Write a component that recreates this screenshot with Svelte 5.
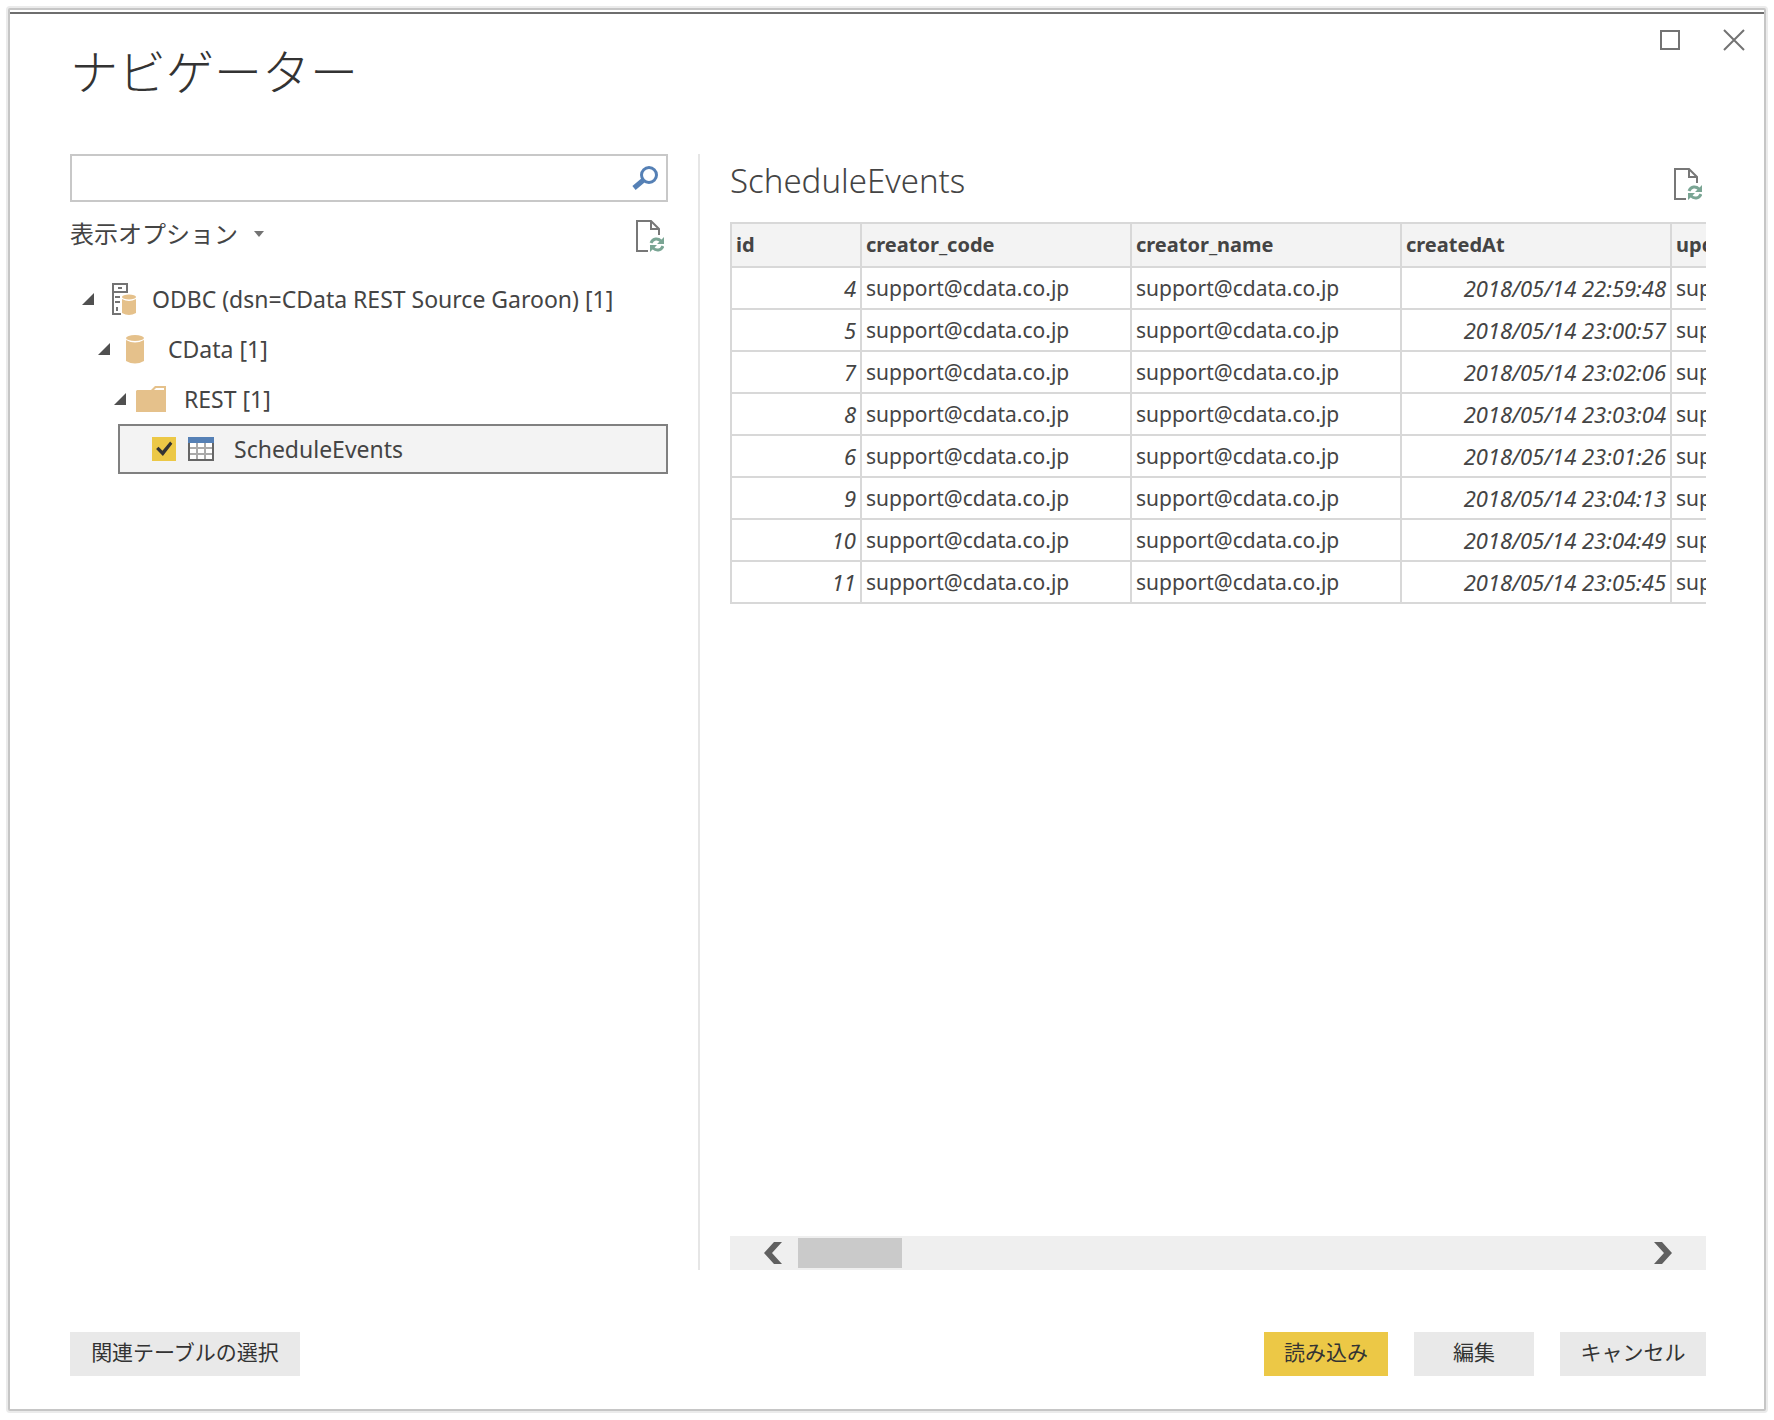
<script lang="ts">
	type Row = { id: number; createdAt: string };

	const user = "support@cdata.co.jp";
	const columns = ["id", "creator_code", "creator_name", "createdAt", "updater_code"];
	const rows: Row[] = [
		{ id: 4, createdAt: "2018/05/14 22:59:48" },
		{ id: 5, createdAt: "2018/05/14 23:00:57" },
		{ id: 7, createdAt: "2018/05/14 23:02:06" },
		{ id: 8, createdAt: "2018/05/14 23:03:04" },
		{ id: 6, createdAt: "2018/05/14 23:01:26" },
		{ id: 9, createdAt: "2018/05/14 23:04:13" },
		{ id: 10, createdAt: "2018/05/14 23:04:49" },
		{ id: 11, createdAt: "2018/05/14 23:05:45" },
	];

	let search = $state("");
	let checked = $state(true);
	let open = $state({ odbc: true, cdata: true, rest: true });
	let grid: HTMLDivElement;

	function scrollGrid(amount: number) {
		grid.scrollBy({ left: amount });
	}
</script>

{#snippet refreshIcon()}
	<svg width="28" height="32" viewBox="0 0 28 32" fill="none">
		<path d="M12 31H1V1H15L23 9V15M15 1V9H23" stroke="#777" stroke-width="2" />
		<path d="M15 23C17 18 22 18 25 21M27 26C25 31 20 31 17 28" stroke="#7aa594" stroke-width="3" />
		<path d="M28 17V24H21ZM14 32V25H21Z" fill="#7aa594" />
	</svg>
{/snippet}

{#snippet arrow(expanded: boolean)}
	<svg class="arrow" class:collapsed={!expanded} width="12" height="12" viewBox="0 0 12 12">
		<path d="M12 0V12H0Z" fill="#505050" />
	</svg>
{/snippet}

<div class="dialog">
	<header class="header">
		<h1>ナビゲーター</h1>
		<div class="windowButtons">
			<button aria-label="最大化">
				<svg width="20" height="20" viewBox="0 0 20 20"><rect x="1" y="1" width="18" height="18" fill="none" stroke="#737373" stroke-width="2" /></svg>
			</button>
			<button aria-label="閉じる">
				<svg width="22" height="22" viewBox="0 0 22 22"><path d="M1 1L21 21M21 1L1 21" stroke="#737373" stroke-width="2" /></svg>
			</button>
		</div>
	</header>

	<main class="content">
		<section class="sources">
			<div class="searchBox">
				<input type="text" aria-label="検索" bind:value={search} />
				<button aria-label="検索">
					<svg width="26" height="24" viewBox="0 0 26 24" fill="none" stroke="#5580b5">
						<circle cx="17" cy="9" r="7.5" stroke-width="3" />
						<path d="M11.5 14L2 22" stroke-width="5" />
					</svg>
				</button>
			</div>
			<div class="options">
				<button class="optionsMenu">
					表示オプション
					<svg width="10" height="6" viewBox="0 0 10 6"><path d="M0 0H10L5 6Z" fill="#737373" /></svg>
				</button>
				<button aria-label="更新">{@render refreshIcon()}</button>
			</div>

			<ul class="tree">
				<li>
					<button class="node" onclick={() => (open.odbc = !open.odbc)}>
						{@render arrow(open.odbc)}
						<span class="icon wide">
							<svg width="24" height="32" viewBox="0 0 24 32" fill="none">
								<path d="M15 9V1H1V31H9M1 9H16M6 5H10M3 14H8M3 19H8M5 24V28" stroke="#737373" stroke-width="2" />
								<ellipse cx="17" cy="14" rx="7" ry="2.5" fill="#e5c18b" />
								<path d="M10 16Q17 20 24 16V30Q17 34 10 30Z" fill="#e5c18b" />
							</svg>
						</span>
						ODBC (dsn=CData REST Source Garoon) [1]
					</button>
					{#if open.odbc}
						<ul>
							<li>
								<button class="node" onclick={() => (open.cdata = !open.cdata)}>
									{@render arrow(open.cdata)}
									<span class="icon">
										<svg width="18" height="29" viewBox="0 0 18 29" fill="#e5c18b">
											<ellipse cx="9" cy="3" rx="9" ry="3" />
											<path d="M0 5Q9 10 18 5V26Q9 31 0 26Z" />
										</svg>
									</span>
									CData [1]
								</button>
								{#if open.cdata}
									<ul>
										<li>
											<button class="node" onclick={() => (open.rest = !open.rest)}>
												{@render arrow(open.rest)}
												<span class="icon folder">
													<svg width="30" height="26" viewBox="0 0 30 26">
														<path d="M0 5L1 4H15L19 0H30V26H0Z" fill="#e5c18b" />
														<path d="M18 4L20 2H28V4Z" fill="#fff" />
													</svg>
												</span>
												REST [1]
											</button>
											{#if open.rest}
												<div class="leaf">
													<input type="checkbox" id="scheduleEvents" bind:checked />
													<label for="scheduleEvents">
														<svg width="26" height="24" viewBox="0 0 26 24" fill="none">
															<rect x="1" y="1" width="24" height="22" fill="#fff" />
															<path d="M9 6V22M17 6V22M2 11H24M2 17H24" stroke="#aaa" stroke-width="2" />
															<path d="M1 6V23H25V6" stroke="#666" stroke-width="2" />
															<path d="M0 0H26V6H0Z" fill="#5580b5" />
														</svg>
														ScheduleEvents
													</label>
												</div>
											{/if}
										</li>
									</ul>
								{/if}
							</li>
						</ul>
					{/if}
				</li>
			</ul>
		</section>

		<section class="preview">
			<div class="previewHeader">
				<h2>ScheduleEvents</h2>
				<button aria-label="更新">{@render refreshIcon()}</button>
			</div>
			<div class="grid" bind:this={grid}>
				<table>
					<thead>
						<tr>
							{#each columns as column}
								<th>{column}</th>
							{/each}
						</tr>
					</thead>
					<tbody>
						{#each rows as row}
							<tr>
								<td class="number">{row.id}</td>
								<td>{user}</td>
								<td>{user}</td>
								<td class="number">{row.createdAt}</td>
								<td>{user}</td>
							</tr>
						{/each}
					</tbody>
				</table>
			</div>
			<div class="scrollbar">
				<button aria-label="左へ" onclick={() => scrollGrid(-270)}>
					<svg width="18" height="22" viewBox="0 0 18 22"><path d="M10 0H18L8 11L18 22H10L0 11Z" fill="#606060" /></svg>
				</button>
				<div class="track"><div class="thumb"></div></div>
				<button aria-label="右へ" onclick={() => scrollGrid(270)}>
					<svg width="18" height="22" viewBox="0 0 18 22"><path d="M8 0H0L10 11L0 22H8L18 11Z" fill="#606060" /></svg>
				</button>
			</div>
		</section>
	</main>

	<footer class="footer">
		<button class="related">関連テーブルの選択</button>
		<button class="load">読み込み</button>
		<button class="edit">編集</button>
		<button class="cancel">キャンセル</button>
	</footer>
</div>

<style>
	:global(body) {
		margin: 0;
		background: #fff;
	}

	.dialog {
		box-sizing: border-box;
		display: flex;
		flex-direction: column;
		min-height: calc(100vh - 17px);
		margin: 8px 8px 9px;
		padding-top: 2px;
		border: 2px solid #c6c6c6;
		border-radius: 2px;
		box-shadow: 0 0 0 2px #ebebeb;
		background: #fff;
		color: #444;
		font-family: "Noto Sans", "Noto Sans CJK JP", sans-serif;
		font-size: 23px;
	}

	button {
		padding: 0;
		border: none;
		background: none;
		color: inherit;
		font: inherit;
		cursor: pointer;
	}

	svg {
		display: block;
		flex: none;
	}

	h1, h2 {
		margin: 0;
		font-weight: 300;
	}

	.header {
		display: flex;
		justify-content: space-between;
		height: 140px;
		padding: 0 19px 0 60px;
		border-top: 2px solid #6e6e6e;
	}

	h1 {
		padding-top: 20px;
		color: #333;
		font-family: "Noto Sans CJK JP", sans-serif;
		font-size: 48px;
		line-height: 70px;
	}

	.windowButtons {
		display: flex;
		align-items: center;
		gap: 43px;
		height: 52px;
	}

	.content {
		display: flex;
		flex: 1;
		padding: 0 58px 0 60px;
	}

	.sources {
		flex: 0 1 598px;
		padding-right: 30px;
		border-right: 2px solid #e6e6e6;
	}

	.searchBox {
		display: flex;
		align-items: center;
		box-sizing: border-box;
		height: 48px;
		padding-right: 8px;
		border: 2px solid #c8c8c8;
	}

	.searchBox input {
		flex: 1;
		min-width: 0;
		padding: 0 8px;
		border: none;
		outline: none;
		font: inherit;
	}

	.options {
		display: flex;
		align-items: center;
		justify-content: space-between;
		height: 68px;
		padding-right: 4px;
	}

	.optionsMenu {
		display: flex;
		align-items: center;
		gap: 16px;
		padding-bottom: 4px;
		font-size: 24px;
		line-height: 32px;
	}

	.tree, .tree ul {
		margin: 0;
		padding: 0;
		list-style: none;
	}

	.tree {
		padding: 4px 0 0 12px;
	}

	.tree ul {
		padding-left: 16px;
	}

	.node {
		display: flex;
		align-items: center;
		height: 50px;
		white-space: nowrap;
	}

	.arrow.collapsed {
		transform: rotate(-45deg);
	}

	.icon {
		width: 42px;
		margin-left: 16px;
	}

	.icon.wide {
		width: 40px;
		margin-left: 18px;
	}

	.icon.folder {
		width: 48px;
		margin-left: 10px;
	}

	.leaf {
		display: flex;
		align-items: center;
		box-sizing: border-box;
		height: 50px;
		margin-left: 4px;
		padding-left: 32px;
		border: 2px solid #808080;
		background: #f3f3f3;
	}

	.leaf input {
		appearance: none;
		width: 24px;
		height: 24px;
		margin: 0 12px 0 0;
		border: 1px solid #ecc846;
		background: #fff;
	}

	.leaf input:checked {
		background: #ecc846;
	}

	.leaf input:checked::before {
		content: "";
		display: block;
		height: 22px;
		background: #333;
		clip-path: polygon(14% 50%, 25% 40%, 43% 58%, 78% 16%, 88% 26%, 45% 82%);
	}

	.leaf label {
		display: flex;
		align-items: center;
		gap: 20px;
	}

	.preview {
		display: flex;
		flex: 1;
		flex-direction: column;
		min-width: 0;
		padding-left: 30px;
	}

	.previewHeader {
		display: flex;
		align-items: center;
		justify-content: space-between;
		height: 60px;
		padding-right: 4px;
		margin-bottom: 8px;
	}

	h2 {
		padding-bottom: 6px;
		font-size: 33px;
		line-height: 54px;
	}

	.grid {
		flex: 1;
		overflow: hidden;
	}

	table {
		width: 1212px;
		table-layout: fixed;
		border-spacing: 0;
		border-top: 2px solid #d8d8d8;
	}

	th, td {
		box-sizing: border-box;
		height: 42px;
		padding: 0 4px;
		border-right: 2px solid #d8d8d8;
		border-bottom: 2px solid #d8d8d8;
		font-size: 21px;
		line-height: 28px;
		text-align: left;
		white-space: nowrap;
	}

	th {
		width: 270px;
		height: 44px;
		background: #f3f3f3;
		font-size: 20px;
	}

	th:first-child {
		width: 132px;
	}

	th:first-child, td:first-child {
		border-left: 2px solid #d8d8d8;
	}

	td.number {
		font-size: 22px;
		font-style: italic;
		text-align: right;
	}

	.scrollbar {
		display: flex;
		align-items: center;
		gap: 16px;
		height: 34px;
		padding: 0 34px;
		background: #efefef;
	}

	.track {
		flex: 1;
	}

	.thumb {
		width: 104px;
		height: 30px;
		background: #cacaca;
	}

	.footer {
		display: flex;
		gap: 26px;
		padding: 62px 58px 33px 60px;
	}

	.footer button {
		height: 44px;
		background: #e9e9e9;
		color: #333;
		font-size: 21px;
		line-height: 40px;
		padding: 0 18px 4px;
	}

	.footer .related {
		min-width: 230px;
		margin-right: auto;
	}

	.footer .load {
		min-width: 124px;
		background: #ecc846;
	}

	.footer .edit {
		min-width: 120px;
	}

	.footer .cancel {
		min-width: 146px;
	}
</style>
